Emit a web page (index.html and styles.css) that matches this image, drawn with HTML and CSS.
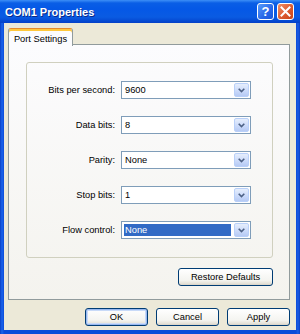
FILE: index.html
```html
<!DOCTYPE html>
<html>
<head>
<meta charset="utf-8">
<link rel="stylesheet" href="styles.css">
</head>
<body>
<div class="window">
  <div class="titlebar">
    <span class="title">COM1 Properties</span>
    <div class="caption-btns">
      <span class="cbtn help">?</span>
      <span class="cbtn close"><svg width="11" height="11" viewBox="0 0 11 11"><path d="M1.5 1.5 L9.5 9.5 M9.5 1.5 L1.5 9.5" stroke="#fff" stroke-width="2" stroke-linecap="square"/></svg></span>
    </div>
  </div>
  <div class="client">
    <div class="tabs"><div class="tab">Port Settings</div></div>
    <div class="page">
      <div class="group">
        <span class="lbl">Bits per second:</span>
        <div class="combo"><span class="val">9600</span><span class="drop"><svg width="7" height="5" viewBox="0 0 7 5"><path d="M0.7 0.8 L3.5 3.6 L6.3 0.8" fill="none" stroke="#4d6185" stroke-width="1.6"/></svg></span></div>
        <span class="lbl">Data bits:</span>
        <div class="combo"><span class="val">8</span><span class="drop"><svg width="7" height="5" viewBox="0 0 7 5"><path d="M0.7 0.8 L3.5 3.6 L6.3 0.8" fill="none" stroke="#4d6185" stroke-width="1.6"/></svg></span></div>
        <span class="lbl">Parity:</span>
        <div class="combo"><span class="val">None</span><span class="drop"><svg width="7" height="5" viewBox="0 0 7 5"><path d="M0.7 0.8 L3.5 3.6 L6.3 0.8" fill="none" stroke="#4d6185" stroke-width="1.6"/></svg></span></div>
        <span class="lbl">Stop bits:</span>
        <div class="combo"><span class="val">1</span><span class="drop"><svg width="7" height="5" viewBox="0 0 7 5"><path d="M0.7 0.8 L3.5 3.6 L6.3 0.8" fill="none" stroke="#4d6185" stroke-width="1.6"/></svg></span></div>
        <span class="lbl">Flow control:</span>
        <div class="combo"><span class="val selected">None</span><span class="drop"><svg width="7" height="5" viewBox="0 0 7 5"><path d="M0.7 0.8 L3.5 3.6 L6.3 0.8" fill="none" stroke="#4d6185" stroke-width="1.6"/></svg></span></div>
      </div>
      <div class="page-actions"><button class="btn restore">Restore Defaults</button></div>
    </div>
    <div class="dialog-actions">
      <button class="btn default">OK</button>
      <button class="btn">Cancel</button>
      <button class="btn">Apply</button>
    </div>
  </div>
</div>
</body>
</html>
```
FILE: styles.css
```css
html, body {
  margin: 0;
  padding: 0;
}
body {
  width: 300px;
  height: 334px;
  overflow: hidden;
  font-family: "Liberation Sans", Arial, sans-serif;
  font-size: 9.3px;
  color: #000;
  background: #0b4bd9;
}
.window {
  width: 300px;
  height: 334px;
  display: flex;
  flex-direction: column;
  background: linear-gradient(to right, #0a3fc4 0, #1a64ec 2px, #0b4bd9 4px, #0b4bd9 296px, #1a5ce4 298px, #0a3fc4 300px);
}
.titlebar {
  height: 23px;
  flex: none;
  display: flex;
  align-items: center;
  justify-content: space-between;
  background: linear-gradient(#3d8ff7 0, #0a5ee6 3px, #0558e6 9px, #0a5be2 17px, #0549d2 21px, #0640c6 23px);
}
.title {
  color: #fff;
  font-weight: bold;
  font-size: 11px;
  padding-left: 5px;
  text-shadow: 1px 1px 0 #0a2a8a;
}
.caption-btns {
  display: flex;
  gap: 3px;
  padding-right: 6px;
}
.cbtn {
  width: 17px;
  height: 17px;
  box-sizing: border-box;
  border: 1px solid #fff;
  border-radius: 3px;
  display: flex;
  align-items: center;
  justify-content: center;
  color: #fff;
}
.help {
  background: linear-gradient(135deg, #5a9cfb, #2766e8 60%, #1a55d8);
  font-weight: bold;
  font-size: 13px;
}
.close {
  background: linear-gradient(135deg, #f0906a, #dc5a30 55%, #c84418);
}
.client {
  flex: 1;
  margin: 0 4px 4px;
  background: #ece9d8;
  padding: 5px 6px 0 4px;
  display: flex;
  flex-direction: column;
}
.tabs {
  display: flex;
  height: 17px;
  position: relative;
  z-index: 1;
  margin-bottom: -1px;
}
.tab {
  width: 65px;
  height: 18px;
  box-sizing: border-box;
  border: 1px solid #919b9c;
  border-bottom: none;
  border-top: 1px solid #e68b2c;
  border-radius: 3px 3px 0 0;
  box-shadow: inset 0 2px 0 #ffc83c;
  background: #fcfcfe;
  display: flex;
  align-items: center;
  justify-content: center;
  padding-top: 2px;
}
.page {
  height: 256px;
  box-sizing: border-box;
  border: 1px solid #919b9c;
  border-right-color: #919b9c;
  background: linear-gradient(#fcfcfe, #f4f3ee);
  padding: 17px 16px 0 17px;
  display: flex;
  flex-direction: column;
}
.group {
  height: 196px;
  box-sizing: border-box;
  border: 1px solid #d0d0bf;
  border-radius: 3px;
  display: grid;
  grid-template-columns: 88px 130px;
  grid-auto-rows: 18px;
  column-gap: 6px;
  row-gap: 17px;
  padding-top: 18px;
  align-content: start;
}
.lbl {
  justify-self: end;
  align-self: center;
  white-space: nowrap;
}
.combo {
  height: 18px;
  box-sizing: border-box;
  border: 1px solid #7f9db9;
  background: #fff;
  display: flex;
  align-items: stretch;
  padding: 1px;
}
.val {
  flex: 1;
  display: flex;
  align-items: center;
  padding-left: 2px;
  margin-right: 2px;
}
.val.selected {
  background: #316ac5;
  color: #fff;
  margin: 1px 3px 1px 1px;
  padding-left: 1px;
}
.drop {
  width: 15px;
  box-sizing: border-box;
  border: 1px solid #b9d0f9;
  border-radius: 2px;
  background: linear-gradient(#e6eefc, #c9d9fa 60%, #b6caf4);
  display: flex;
  align-items: center;
  justify-content: center;
}
.page-actions {
  display: flex;
  justify-content: flex-end;
  margin-top: 10px;
}
.btn {
  height: 18px;
  box-sizing: border-box;
  border: 1px solid #003c74;
  border-radius: 3px;
  background: linear-gradient(#ffffff, #f4f4f0 70%, #e3e0d6 92%, #d6d0c5);
  font-family: "Liberation Sans", Arial, sans-serif;
  font-size: 9.3px;
  color: #000;
  padding: 0;
  margin: 0;
}
.restore {
  width: 95px;
}
.dialog-actions {
  display: flex;
  justify-content: flex-end;
  gap: 8px;
  margin-top: 8px;
}
.dialog-actions .btn {
  width: 63px;
}
.btn.default {
  box-shadow: inset 0 0 0 1px #98b8f0, inset 0 0 0 2px #c8daf8;
}
```
